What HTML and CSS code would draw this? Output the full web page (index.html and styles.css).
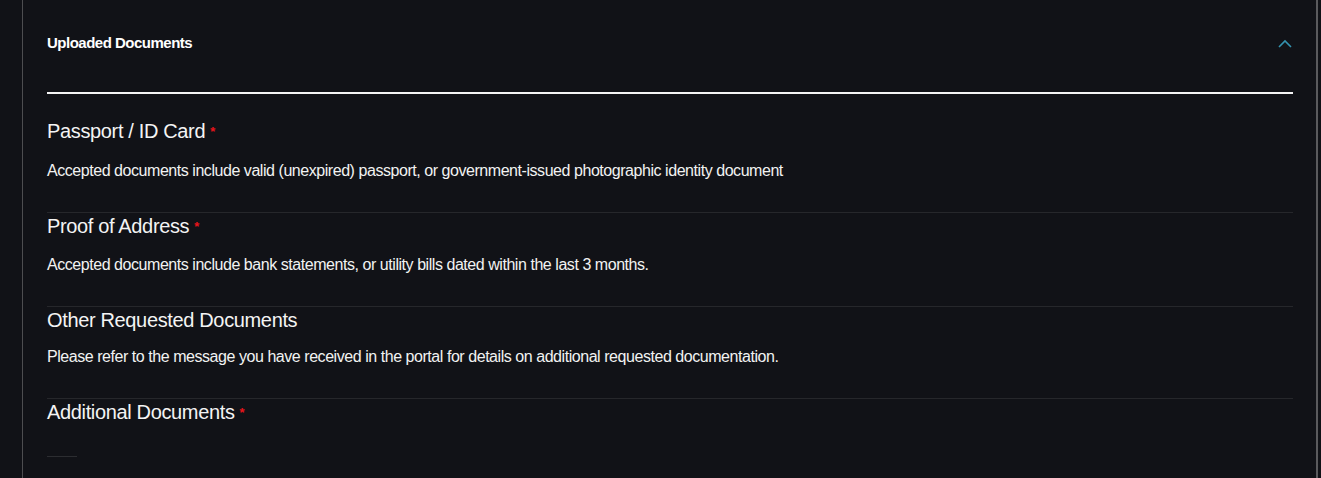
FILE: index.html
```html
<!DOCTYPE html>
<html lang="en">
<head>
  <meta charset="UTF-8" />
  <meta name="viewport" content="width=device-width, initial-scale=1.0"/>
  <title>Uploaded Documents</title>
  <link rel="stylesheet" href="styles.css">
</head>
<body>

  <div class="page">
    <div class="panel">

      <!-- header -->
      <div class="panel-head">
        <h3>Uploaded Documents</h3>
        <svg class="chevron" width="14" height="9" viewBox="0 0 14 9">
          <polyline points="1,8 7,2 13,8" fill="none" stroke="#3493b0" stroke-width="1.6"/>
        </svg>
      </div>

      <div class="doc first">
        <div class="doc-title">Passport / ID Card<span class="req">*</span></div>
        <p class="doc-text">Accepted documents include valid (unexpired) passport, or government-issued photographic identity document</p>
      </div>

      <div class="doc">
        <div class="doc-title">Proof of Address<span class="req">*</span></div>
        <p class="doc-text">Accepted documents include bank statements, or utility bills dated within the last 3 months.</p>
      </div>

      <div class="doc">
        <div class="doc-title">Other Requested Documents</div>
        <p class="doc-text tight">Please refer to the message you have received in the portal for details on additional requested documentation.</p>
      </div>

      <div class="doc last">
        <div class="doc-title">Additional Documents<span class="req">*</span></div>
        <div class="stub"></div>
      </div>

    </div>
  </div>

</body>
</html>
```

FILE: styles.css
```css
body {
  font-family: 'Liberation Sans', Arial, sans-serif;
  background-color: #111217;
  color: #f2f2f2;
  margin: 0;
  height: 478px;
  overflow: hidden;
}

.page {
  margin-left: 22px;
  margin-right: 3px;
  height: 478px;
  border-left: 1px solid #4d4d50;
  border-right: 2px solid #5a5a5d;
}

.panel {
  padding: 0 23px 0 24px;
}

.panel-head {
  display: flex;
  justify-content: space-between;
  align-items: center;
  padding-top: 34px;
  padding-bottom: 40px;
  border-bottom: 2px solid #f4f4f4;
}

.panel-head h3 {
  margin: 0;
  font-size: 15px;
  line-height: 18px;
  font-weight: bold;
  letter-spacing: -0.5px;
  color: #ffffff;
}

.chevron {
  display: block;
  margin-right: 1px;
}

.doc {
  padding-top: 1px;
  padding-bottom: 31px;
  border-bottom: 1px solid #26272b;
}

.doc.first {
  padding-top: 25px;
}

.doc-title {
  font-size: 20px;
  line-height: 24px;
  letter-spacing: -0.35px;
  color: #f4f4f4;
}

.req {
  color: #e8141b;
  font-size: 13px;
  font-weight: bold;
  margin-left: 5px;
  vertical-align: 2px;
}

.doc-text {
  margin: 16px 0 0;
  font-size: 16px;
  line-height: 20px;
  letter-spacing: -0.45px;
  color: #f2f2f2;
}

.doc.first .doc-text {
  margin-top: 17px;
}

.doc-text.tight {
  margin-top: 15px;
}

.doc.last {
  border-bottom: none;
}

.stub {
  width: 30px;
  height: 1px;
  margin-top: 31px;
  background-color: #2c2d31;
}
```
